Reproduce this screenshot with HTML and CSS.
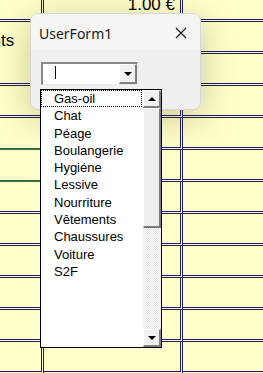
FILE: index.html
```html
<!DOCTYPE html>
<html lang="fr">
<head>
    <meta charset="UTF-8">
    <meta name="viewport" content="width=device-width, initial-scale=1.0">
    <title>UserForm1</title>
    <link rel="stylesheet" href="styles.css">
</head>
<body>
    <!-- --- SHEET --- -->
    <div class="sheet">
        <div class="cell col-a"></div>
        <div class="cell col-b amount">1.00 €</div>
        <div class="cell col-c"></div>

        <div class="cell col-a merged"><span class="overflow">ents</span></div>
        <div class="cell col-b"></div>
        <div class="cell col-c"></div>

        <div class="cell col-a"></div><div class="cell col-b"></div><div class="cell col-c"></div>
        <div class="cell col-a"></div><div class="cell col-b"></div><div class="cell col-c"></div>
        <div class="cell col-a green"></div><div class="cell col-b"></div><div class="cell col-c"></div>
        <div class="cell col-a green"></div><div class="cell col-b"></div><div class="cell col-c"></div>
        <div class="cell col-a"></div><div class="cell col-b"></div><div class="cell col-c"></div>
        <div class="cell col-a"></div><div class="cell col-b"></div><div class="cell col-c"></div>
        <div class="cell col-a"></div><div class="cell col-b"></div><div class="cell col-c"></div>
        <div class="cell col-a"></div><div class="cell col-b"></div><div class="cell col-c"></div>
        <div class="cell col-a"></div><div class="cell col-b"></div><div class="cell col-c"></div>
        <div class="cell col-a"></div><div class="cell col-b"></div><div class="cell col-c"></div>
    </div>

    <!-- --- USERFORM WINDOW --- -->
    <div class="userform">
        <div class="titlebar">
            <span class="title">UserForm1</span>
            <svg class="close" width="12" height="12" viewBox="0 0 12 12">
                <path d="M1 1 L11 11 M11 1 L1 11" stroke="#1a1a1a" stroke-width="1.1" fill="none"/>
            </svg>
        </div>
        <div class="form-body">
            <div class="combo">
                <div class="combo-text"><span class="caret"></span></div>
                <div class="combo-btn"><span class="arrow-down"></span></div>
            </div>
        </div>
    </div>

    <!-- --- DROPDOWN LIST --- -->
    <div class="dropdown">
        <ul class="items">
            <li class="item focused">Gas-oil</li>
            <li class="item">Chat</li>
            <li class="item">Péage</li>
            <li class="item">Boulangerie</li>
            <li class="item">Hygiéne</li>
            <li class="item">Lessive</li>
            <li class="item">Nourriture</li>
            <li class="item">Vêtements</li>
            <li class="item">Chaussures</li>
            <li class="item">Voiture</li>
            <li class="item">S2F</li>
        </ul>
        <div class="scrollbar">
            <div class="sb-btn"><span class="arrow-up"></span></div>
            <div class="sb-thumb"></div>
            <div class="sb-track"></div>
            <div class="sb-btn"><span class="arrow-down"></span></div>
        </div>
    </div>
</body>
</html>
```

FILE: styles.css
```css
/* --- RESET & GLOBAL STYLES --- */
* {
    margin: 0;
    padding: 0;
    box-sizing: border-box;
}

body {
    width: 263px;
    height: 373px;
    overflow: hidden;
    background-color: #FFFFCC;
    font-family: "Liberation Sans", Arial, sans-serif;
    color: #000;
    position: relative;
}

/* --- SHEET GRID --- */
.sheet {
    display: grid;
    grid-template-columns: 44px 139px 1fr;
    grid-template-rows: 22px repeat(11, 32px);
}

.cell {
    border-bottom: 3px double #1C1C5E;
    overflow: visible;
    white-space: nowrap;
}

.col-a,
.col-b {
    border-right: 3px double #1C1C5E;
}

.col-a.merged {
    border-bottom: none;
    font-size: 17px;
    padding-top: 9px;
}

.col-a.green {
    border-bottom: 2px solid #3C6B3C;
}

.overflow {
    display: inline-block;
    margin-left: -18px;
}

.amount {
    font-size: 17px;
    text-align: right;
    padding-right: 5px;
    line-height: 14px;
    margin-top: -2px;
}

/* --- USERFORM --- */
.userform {
    position: absolute;
    left: 30px;
    top: 13px;
    width: 171px;
    height: 97px;
    background-color: #F0F0F0;
    border: 1px solid #D6D6D6;
    border-radius: 8px;
    box-shadow: 0 8px 36px rgba(60, 55, 0, 0.28);
    overflow: hidden;
}

.titlebar {
    height: 36px;
    background-color: #F5F5F3;
    display: flex;
    align-items: center;
    justify-content: space-between;
    padding: 2px 13px 0 8px;
}

.title {
    font-family: "Noto Sans", sans-serif;
    font-size: 14px;
    color: #1A1A1A;
}

.form-body {
    padding: 12px 0 0 10px;
}

.combo {
    width: 97px;
    height: 23px;
    display: flex;
    background-color: #fff;
    border-top: 2px solid #8A8A8A;
    border-left: 2px solid #8A8A8A;
    border-right: 1px solid #E8E8E8;
    border-bottom: 1px solid #E8E8E8;
}

.combo-text {
    flex: 1;
    padding: 2px 0 0 12px;
}

.caret {
    display: block;
    width: 1px;
    height: 13px;
    background-color: #000;
}

.combo-btn {
    width: 18px;
    background-color: #F0F0F0;
    border-top: 1px solid #fff;
    border-left: 1px solid #fff;
    border-right: 2px solid #808080;
    border-bottom: 2px solid #808080;
    display: flex;
    align-items: center;
    justify-content: center;
}

.arrow-down {
    width: 0;
    height: 0;
    border-left: 4px solid transparent;
    border-right: 4px solid transparent;
    border-top: 4px solid #000;
}

.arrow-up {
    width: 0;
    height: 0;
    border-left: 4px solid transparent;
    border-right: 4px solid transparent;
    border-bottom: 4px solid #000;
}

/* --- DROPDOWN LIST --- */
.dropdown {
    position: absolute;
    left: 40px;
    top: 89px;
    width: 122px;
    height: 259px;
    background-color: #fff;
    border: 1px solid #000;
    display: flex;
}

.items {
    flex: 1;
    list-style: none;
    padding-right: 1px;
}

.item {
    height: 17.3px;
    line-height: 16px;
    font-size: 13px;
    padding-left: 12px;
    border: 1px solid transparent;
}

.item.focused {
    border: 1px dotted #000;
}

.scrollbar {
    width: 18px;
    display: flex;
    flex-direction: column;
}

.sb-btn {
    height: 18px;
    background-color: #F0F0F0;
    border-top: 1px solid #fff;
    border-left: 1px solid #fff;
    border-right: 2px solid #808080;
    border-bottom: 2px solid #808080;
    display: flex;
    align-items: center;
    justify-content: center;
}

.sb-thumb {
    height: 120px;
    background-color: #EFEFEF;
    border-top: 1px solid #fff;
    border-left: 1px solid #fff;
    border-right: 2px solid #7A7A7A;
    border-bottom: 2px solid #7A7A7A;
}

.sb-track {
    flex: 1;
    background-color: #F4F4F4;
    background-image: repeating-conic-gradient(#E4E4E4 0 25%, #FFFFFF 0 50%);
    background-size: 2px 2px;
}
```
